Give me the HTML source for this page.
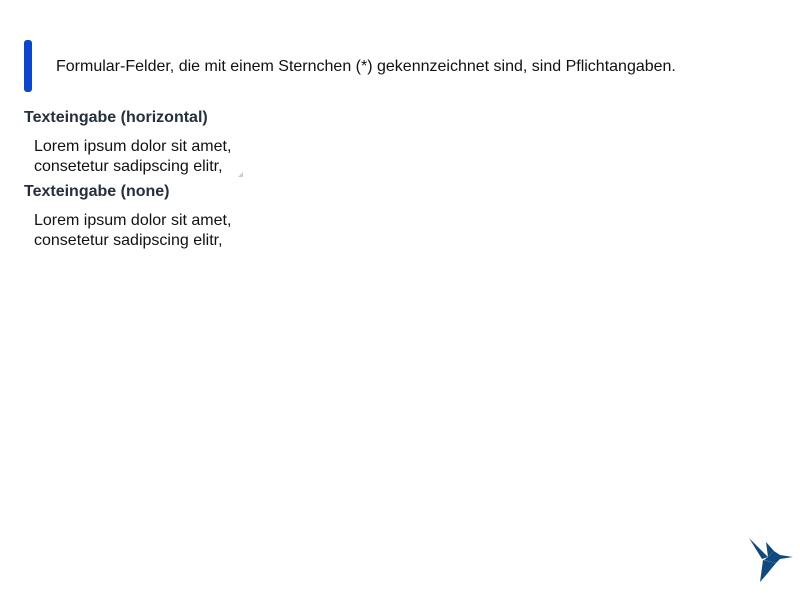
<!DOCTYPE html>
<html><head><style>
body{margin:0;width:800px;height:600px;background:#fff;font-family:"Liberation Sans",sans-serif;position:relative;overflow:hidden}
.bar{position:absolute;left:24px;top:40px;width:8px;height:52px;background:#0b45d1;border-radius:3px}
.note{position:absolute;left:56px;top:58px;font-size:16px;color:#111;white-space:nowrap}
.lbl{position:absolute;left:24px;font-size:16px;font-weight:bold;color:#262f3d;white-space:nowrap}
.txt{position:absolute;left:34px;font-size:16px;line-height:20px;color:#111;white-space:nowrap}
</style></head><body>
<div class="bar"></div>
<div class="note">Formular-Felder, die mit einem Sternchen (*) gekennzeichnet sind, sind Pflichtangaben.</div>
<div class="lbl" style="top:109px">Texteingabe (horizontal)</div>
<div class="txt" style="top:137px">Lorem ipsum dolor sit amet,<br>consetetur sadipscing elitr,</div>
<svg style="position:absolute;left:238px;top:172px" width="6" height="6"><path d="M5 0L5 5L0 5Z" fill="#ccc"/></svg>
<div class="lbl" style="top:183px">Texteingabe (none)</div>
<div class="txt" style="top:211px">Lorem ipsum dolor sit amet,<br>consetetur sadipscing elitr,</div>
<svg style="position:absolute;left:740px;top:530px" width="60" height="60" viewBox="0 0 60 60">
<g fill="#0f4a7f">
<path d="M9 8L28 27L22 29Z"/>
<path d="M26 12L34 21L28 27Z"/>
<path d="M28 27L34 21L40 25L53 27L40 29L36 33L24 30Z"/>
<path d="M23 30L36 33L27 44L20 52Z"/>
</g></svg>
</body></html>
